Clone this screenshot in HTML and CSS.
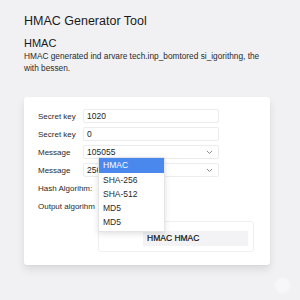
FILE: index.html
```html
<!DOCTYPE html>
<html>
<head>
<meta charset="utf-8">
<link rel="stylesheet" href="styles.css">
</head>
<body>
<div class="page">
  <h1 class="title">HMAC Generator Tool</h1>
  <h2 class="subtitle">HMAC</h2>
  <p class="desc">HMAC generated ind arvare tech.inp_bomtored si_igorithng, the with bessen.</p>
  <div class="card">
    <div class="row"><span class="label">Secret key</span><div class="field">1020</div></div>
    <div class="row"><span class="label">Secret key</span><div class="field">0</div></div>
    <div class="row"><span class="label">Message</span><div class="field select">105055<svg class="chev" width="7" height="5" viewBox="0 0 7 5"><polyline points="1,1 3.5,3.5 6,1" fill="none" stroke="#8a8a90" stroke-width="1"/></svg></div></div>
    <div class="row"><span class="label">Message</span><div class="field select">256<svg class="chev" width="7" height="5" viewBox="0 0 7 5"><polyline points="1,1 3.5,3.5 6,1" fill="none" stroke="#8a8a90" stroke-width="1"/></svg></div></div>
    <div class="row"><span class="label">Hash Algorihm:</span></div>
    <div class="row"><span class="label">Output algorihm</span></div>
    <div class="output"><div class="output-field">HMAC HMAC</div></div>
    <ul class="dropdown">
      <li class="item active">HMAC</li>
      <li class="item">SHA-256</li>
      <li class="item">SHA-512</li>
      <li class="item">MD5</li>
      <li class="item">MD5</li>
    </ul>
  </div>
  <div class="fab"></div>
</div>
</body>
</html>
```

FILE: styles.css
```css
* { box-sizing: border-box; }
html, body { margin: 0; padding: 0; }
body {
  background: #f1f1f3;
  font-family: "Liberation Sans", Arial, sans-serif;
  color: #1c1c1e;
  width: 300px;
  height: 300px;
  overflow: hidden;
}
.page {
  position: relative;
  padding: 13px 0 0 24px;
  height: 300px;
}
.title {
  margin: 0;
  font-size: 12.5px;
  line-height: 16px;
  font-weight: 400;
  color: #1a1a1c;
}
.subtitle {
  margin: 7px 0 0;
  font-size: 11px;
  line-height: 14px;
  font-weight: 400;
  color: #1a1a1c;
}
.desc {
  margin: 0;
  width: 245px;
  font-size: 8.3px;
  line-height: 12px;
  color: #2a2a2c;
}
.card {
  position: relative;
  margin-top: 23px;
  width: 246px;
  height: 168px;
  background: #ffffff;
  border-radius: 3px;
  box-shadow: 0 5px 9px rgba(0,0,0,0.09), 0 1px 2px rgba(0,0,0,0.04);
  padding: 12px 0 13px 14px;
  display: flex;
  flex-direction: column;
  gap: 4px;
}
.row {
  display: flex;
  align-items: center;
  height: 14px;
}
.label {
  width: 45px;
  flex: none;
  white-space: nowrap;
  font-size: 8px;
  color: #2a2a2c;
}
.field {
  width: 136px;
  height: 14px;
  border: 1px solid #ececee;
  border-radius: 2px;
  padding: 0 3px;
  font-size: 8.5px;
  line-height: 12px;
  color: #1e1e20;
  display: flex;
  align-items: center;
  justify-content: space-between;
}
.chev { margin-right: 2px; }
.output {
  margin: 4px 0 0 60px;
  width: 156px;
  height: 31px;
  border: 1px solid #efeff1;
  border-radius: 3px;
  padding: 9px 5px 0 44px;
}
.output-field {
  height: 15px;
  background: #f3f3f5;
  font-size: 8.5px;
  line-height: 15px;
  padding-left: 4px;
  color: #111113;
  font-weight: 400;
  -webkit-text-stroke: 0.2px #111113;
}
.dropdown {
  position: absolute;
  left: 74px;
  top: 60px;
  width: 67px;
  margin: 0;
  padding: 0 0 2px;
  list-style: none;
  background: #fff;
  border: 1px solid #e4e4e6;
  box-shadow: 0 2px 6px rgba(0,0,0,0.12);
}
.item {
  height: 14px;
  line-height: 14px;
  padding-left: 4px;
  font-size: 8.5px;
  color: #2a2a2c;
}
.item.active {
  height: 15px;
  line-height: 15px;
  background: #4a88ee;
  color: #fff;
}
.fab {
  position: absolute;
  left: 276px;
  top: 279px;
  width: 13px;
  height: 13px;
  border-radius: 50%;
  background: #f7f7f9;
  box-shadow: 0 0 4px rgba(255,255,255,0.9);
}
```
